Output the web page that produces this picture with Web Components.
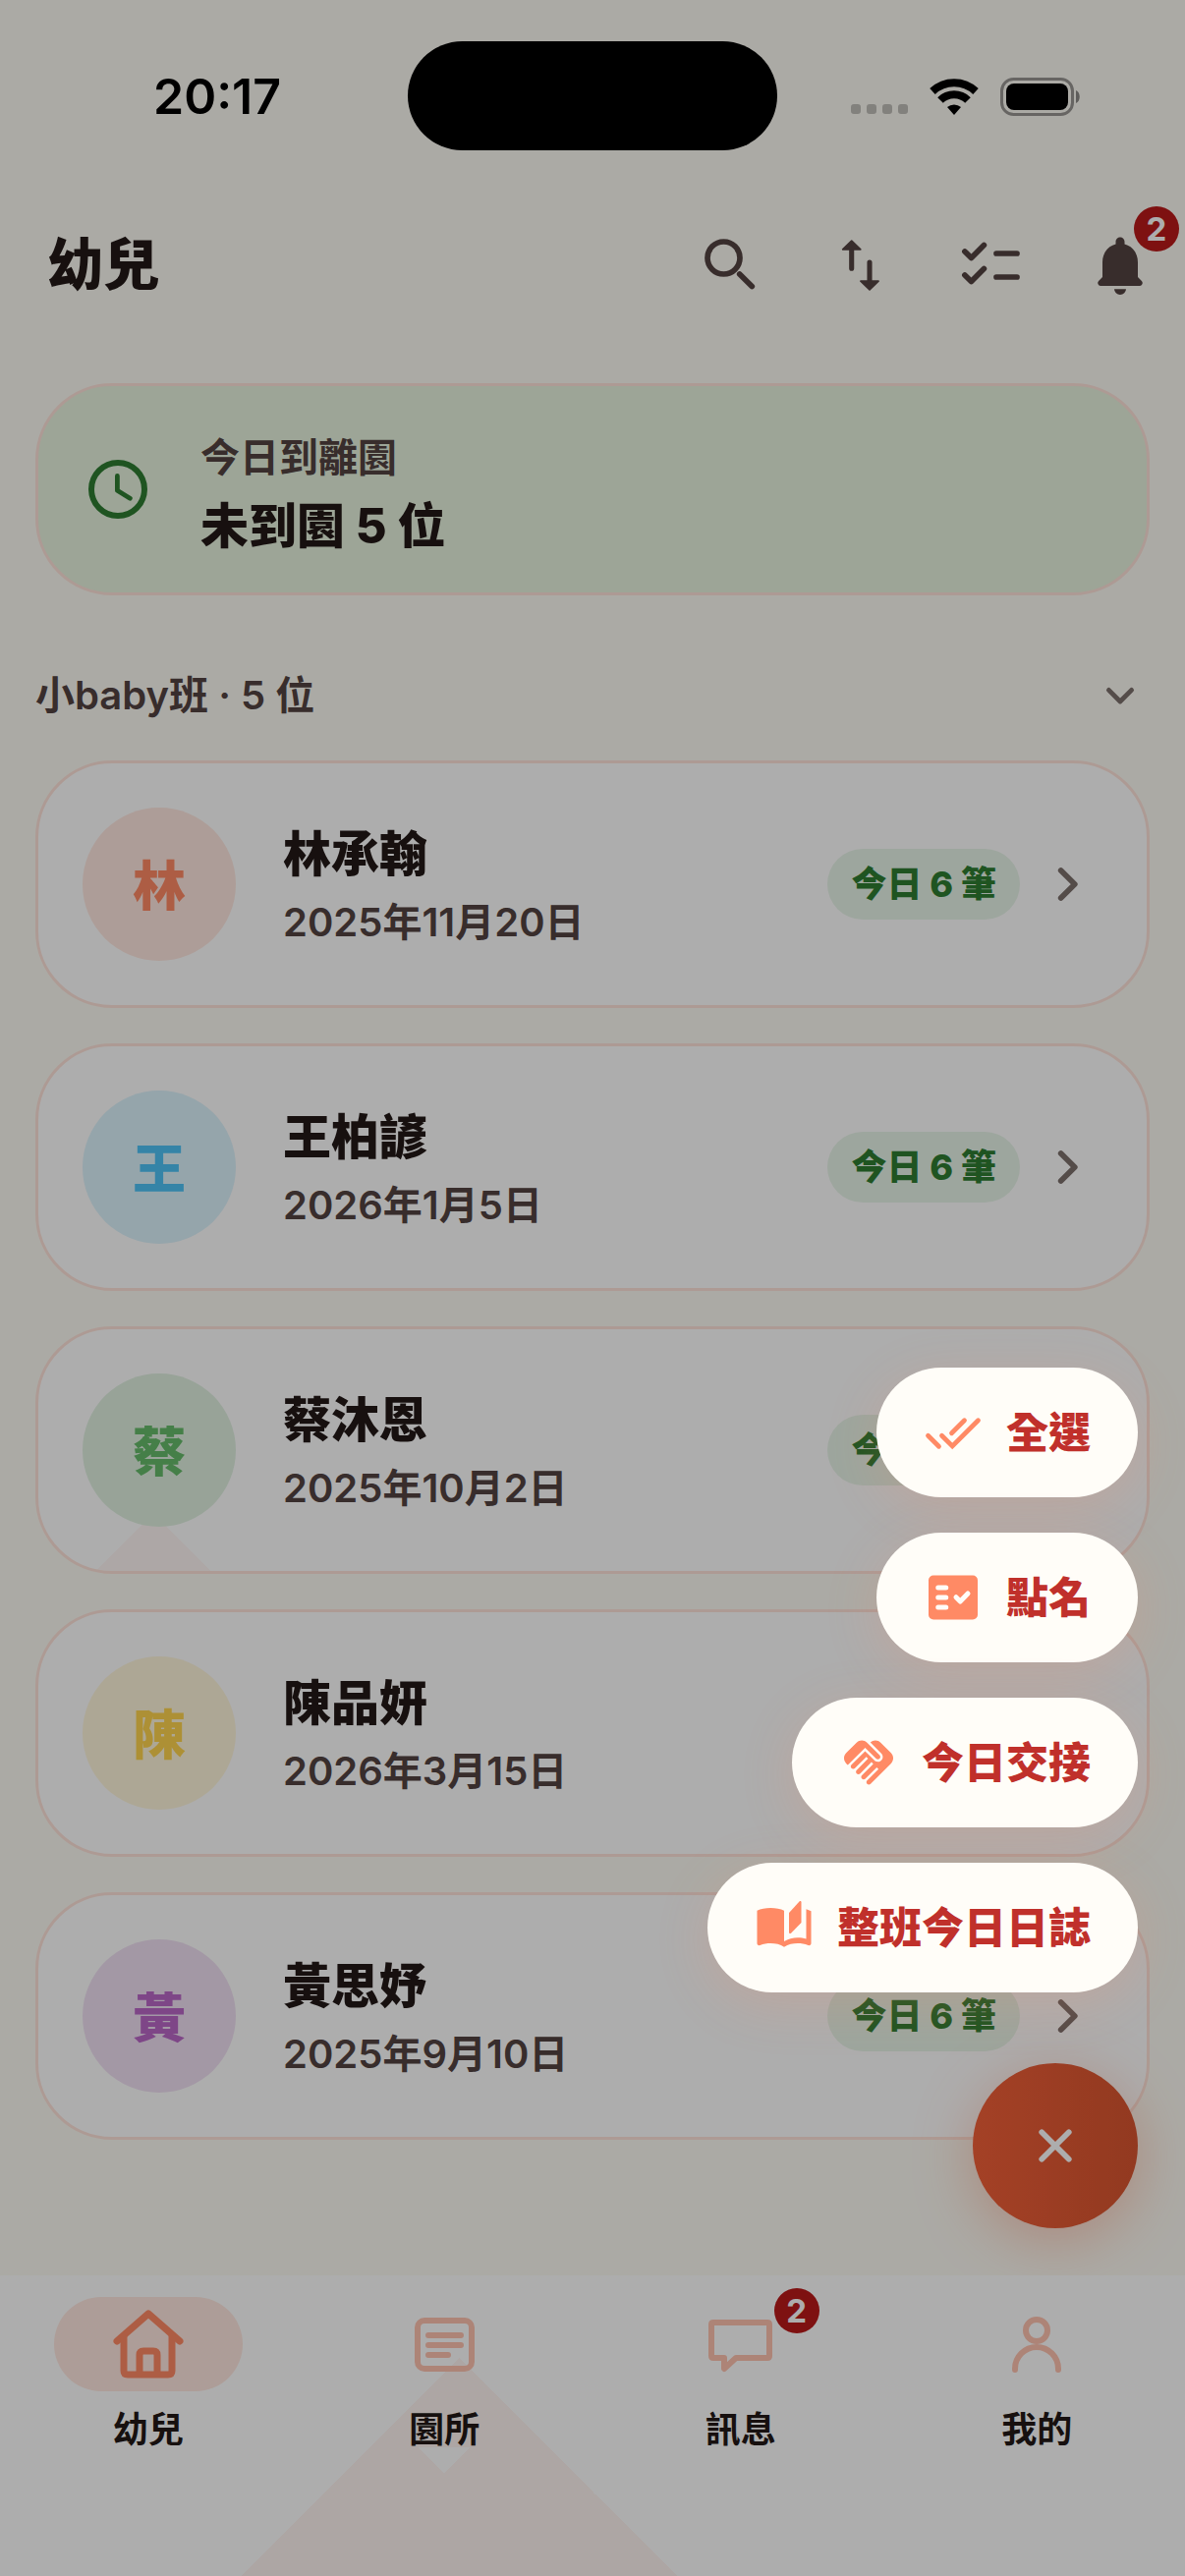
<!DOCTYPE html>
<html lang="zh-Hant">
<head>
<meta charset="utf-8">
<meta name="viewport" content="width=device-width, initial-scale=1">
<title>幼兒</title>
<style>
  html, body {
    margin: 0;
    min-height: 100%;
  }

  body {
    --surface: #fdfbf4;
    --card: #ffffff;
    --outline: #ffe4da;
    --text: #231917;
    --text-soft: #534341;
    --accent: #ff8a65;
    --accent-soft: #ffc3b0;
    --green: #2e7d32;
    --green-soft: #e8f5e9;
    --badge: #ba1a1a;
    background: var(--surface);
    color: var(--text);
    font-family: Inter, "Noto Sans CJK TC", sans-serif;
  }
</style>
</head>
<body>
<app-shell>
  <status-bar slot="top" time="20:17"></status-bar>
  <app-header slot="top">
    幼兒
    <icon-button slot="actions" icon="search" label="搜尋"></icon-button>
    <icon-button slot="actions" icon="sort" label="排序"></icon-button>
    <icon-button slot="actions" icon="checklist" label="選取"></icon-button>
    <icon-button slot="actions" icon="bell" label="通知" count="2"></icon-button>
  </app-header>

  <attendance-banner>
    今日到離園
    <span slot="value">未到園 5 位</span>
  </attendance-banner>

  <class-section>
    <span slot="title">小baby班 · 5 位</span>
    <child-card surname="林" date="2025年11月20日" style="--tone: #ff8a65">林承翰</child-card>
    <child-card surname="王" date="2026年1月5日" style="--tone: #4fc3f7">王柏諺</child-card>
    <child-card surname="蔡" date="2025年10月2日" style="--tone: #66bb6a" peak>蔡沐恩</child-card>
    <child-card surname="陳" date="2026年3月15日" style="--tone: #ffd54f">陳品妍</child-card>
    <child-card surname="黃" date="2025年9月10日" style="--tone: #ba68c8">黃思妤</child-card>
  </class-section>

  <fab-button slot="fab" label="關閉"></fab-button>

  <nav-bar slot="nav">
    <nav-item icon="home" active>幼兒</nav-item>
    <nav-item icon="article">園所</nav-item>
    <nav-item icon="chat" count="2">訊息</nav-item>
    <nav-item icon="person">我的</nav-item>
  </nav-bar>

  <menu-pill slot="menu" icon="done-all">全選</menu-pill>
  <menu-pill slot="menu" icon="fact-check">點名</menu-pill>
  <menu-pill slot="menu" icon="handshake">今日交接</menu-pill>
  <menu-pill slot="menu" icon="book">整班今日日誌</menu-pill>
</app-shell>

<script>
const icons = {
  'search': {
    box: '0 0 24 24',
    body: `<g fill="none" stroke="currentColor" stroke-width="1.9" stroke-linecap="round">
      <circle cx="9.5" cy="9.5" r="5.5"/><path d="M14.9 15l4.2 4.2"/></g>`,
  },
  'sort': {
    box: '0 0 24 24',
    body: `<g fill="currentColor" stroke="currentColor" stroke-linecap="round" stroke-linejoin="round">
      <path stroke-width="1.7" d="M8.9 13.1V6M15 11v7"/>
      <path stroke-width=".6" d="M8.900 3.700l3 2.900H5.900zM15 20.300l-3-2.900h6z"/></g>`,
  },
  'checklist': {
    box: '0 0 24 24',
    body: `<g fill="none" stroke="currentColor" stroke-width="1.9" stroke-linecap="round" stroke-linejoin="round">
      <path d="M3.3 7.3l2.2 2.2 4.3-4.3M3.3 15.3l2.2 2.2 4.3-4.3M14 8h7M14 16h7"/></g>`,
  },
  'bell': {
    box: '0 0 24 24',
    body: `<path fill="currentColor" d="M12 2.5c.8 0 1.5.7 1.5 1.5v.8C16.3 5.5 18 8 18 11v5l1.3 1.3c.6.6.2 1.7-.7 1.7H5.4c-.9 0-1.3-1.1-.7-1.7L6 16v-5c0-3 1.7-5.5 4.5-6.2V4c0-.8.7-1.5 1.5-1.5zM10 20.1h4a2 1.9 0 0 1-4 0z"/>`,
  },
  'clock': {
    box: '0 0 24 24',
    body: `<g fill="none" stroke="currentColor" stroke-linecap="round" stroke-linejoin="round">
      <circle cx="12" cy="12" r="9" stroke-width="2"/><path stroke-width="1.6" d="M11.8 7.5v4.9l4.3 2.7"/></g>`,
  },
  'chevron-down': {
    box: '0 0 24 24',
    body: '<path fill="none" stroke="currentColor" stroke-width="2.4" stroke-linecap="round" stroke-linejoin="round" d="M6.2 9.2l5.8 5.8 5.8-5.8"/>',
  },
  'chevron-right': {
    box: '0 0 24 24',
    body: '<path fill="none" stroke="currentColor" stroke-width="1.9" stroke-linecap="round" stroke-linejoin="round" d="M9.9 7.3l4.7 4.7-4.7 4.7"/>',
  },
  'close': {
    box: '0 0 24 24',
    body: '<path fill="none" stroke="currentColor" stroke-width="1.9" stroke-linecap="round" d="M7.4 7.4l9.2 9.2M16.6 7.4l-9.2 9.2"/>',
  },
  'done-all': {
    box: '0 0 24 24',
    body: `<g fill="none" stroke="currentColor" stroke-width="1.9" stroke-linecap="round">
      <path d="M1.8 13.3l4.4 4.4M7.4 13.3l4.3 4.3L22.2 7.1M16.6 7.1l-5.2 5.2"/></g>`,
  },
  'fact-check': {
    box: '0 0 24 24',
    body: `<rect x="2" y="3" width="20" height="18" rx="2" fill="currentColor"/>
      <path fill="none" stroke="#fffdf8" stroke-width="2" stroke-linecap="round" stroke-linejoin="round" d="M5.9 8h3.2M5.9 12h3.2M5.9 16h3.2M13.2 11.9l1.7 1.7 3.1-3.2"/>`,
  },
  'handshake': {
    box: '0 0 24 24',
    body: `<path fill="currentColor" d="M16.48 10.41c-.39.39-1.04.39-1.43 0l-4.47-4.46-7.05 7.04-.66-.63c-1.17-1.17-1.17-3.07 0-4.24l4.24-4.24c1.17-1.17 3.07-1.17 4.24 0l5.13 5.1c.39.39.39 1.04 0 1.43zm.7-2.12c.78.78.78 2.05 0 2.83-1.27 1.27-2.61.22-2.83 0l-3.76-3.76-5.57 5.57c-.39.39-.39 1.02 0 1.41s1.02.39 1.42 0l4.62-4.62.71.71-4.62 4.62c-.39.39-.39 1.02 0 1.41s1.02.39 1.42 0l4.62-4.62.71.71-4.62 4.62c-.39.39-.39 1.02 0 1.41s1.02.39 1.41 0l4.62-4.62.71.71-4.62 4.62c-.39.39-.39 1.02 0 1.41s1.02.39 1.41 0l8.32-8.34c1.17-1.17 1.17-3.07 0-4.24l-4.24-4.24c-1.15-1.15-3.01-1.17-4.18-.06l4.47 4.47z"/>`,
  },
  'book': {
    box: '0 0 24 24',
    body: `<path fill="currentColor" d="M1 5.1C2.4 4.3 4.500 4 6.500 4S10.600 4.300 12 5.100V17.600c1.500-.9 3.700-1.500 5.500-1.500 1.200 0 2.400.2 3.500.5V4.500c.7.2 1.400.5 2 .8V18.400c0 .7-.6 1-1.200.8-1.400-.6-2.800-.8-4.300-.8-1.800 0-3.900.4-5.500 1.500-1.500-1.100-3.600-1.500-5.500-1.500-1.500 0-2.900.2-4.300.8-.6.2-1.200-.1-1.200-.8z"/>
      <path fill="currentColor" d="M14 6l4.200-4.600c.3-.3.8-.2.8.3V10l-4.200 4.300c-.3.3-.8.1-.8-.3z"/>`,
  },
  'home': {
    box: '0 0 72 70',
    body: `<g fill="none" stroke="currentColor" stroke-width="7" stroke-linecap="round" stroke-linejoin="round">
      <path d="M4 32L36 4l32 28"/><path d="M11 27v35q0 4 4 4h41q4 0 4-4V27"/><path d="M27 64V46q0-4 4-4h10q4 0 4 4v18"/></g>`,
  },
  'article': {
    box: '-6 -8 72 70',
    body: `<g fill="none" stroke="currentColor" stroke-width="6" stroke-linecap="round">
      <rect x="3" y="3" width="55" height="49" rx="7"/><path d="M14 18h33M14 28h33M14 38h20"/></g>`,
  },
  'chat': {
    box: '-3 -10 72 70',
    body: `<path fill="none" stroke="currentColor" stroke-width="6" stroke-linejoin="round" d="M5 3h55q2 0 2 2v32q0 2-2 2H28L16 50V39H5q-2 0-2-2V5q0-2 2-2z"/>`,
  },
  'person': {
    box: '-10 -7 72 70',
    body: `<g fill="none" stroke="currentColor" stroke-width="6" stroke-linecap="round">
      <circle cx="26" cy="14" r="11"/><path d="M4 54v-1a22 22 0 0 1 44 0v1"/></g>`,
  },
};

class UIIcon extends HTMLElement {
  constructor() {
    super();
    this.attachShadow({ mode: 'open' });
  }

  connectedCallback() {
    const { box, body } = icons[this.getAttribute('name')];
    this.shadowRoot.innerHTML = `
      <style>
        :host {
          display: block;
          flex: none;
          width: 72px;
          height: 72px;
        }
        svg {
          display: block;
          width: 100%;
          height: 100%;
        }
      </style>
      <svg viewBox="${box}" aria-hidden="true">${body}</svg>
    `;
  }
}

class CountBadge extends HTMLElement {
  constructor() {
    super();
    this.attachShadow({ mode: 'open' });
    this.shadowRoot.innerHTML = `
      <style>
        :host {
          display: block;
          min-width: 46px;
          border-radius: 23px;
          background: var(--badge);
          color: #fff;
          font-size: 33px;
          font-weight: 700;
          line-height: 46px;
          text-align: center;
        }
      </style>
      <slot></slot>
    `;
  }
}

class AppShell extends HTMLElement {
  constructor() {
    super();
    this.attachShadow({ mode: 'open' });
    this.shadowRoot.innerHTML = `
      <style>
        :host {
          display: flex;
          flex-direction: column;
          position: relative;
          min-height: 100vh;
        }
        main {
          display: flex;
          flex: 1;
          flex-direction: column;
          gap: 36px;
          position: relative;
          overflow: hidden;
          padding: 36px 36px 138px;
        }
        .fab {
          position: absolute;
          right: 48px;
          bottom: 48px;
        }
        .scrim {
          position: absolute;
          inset: 0;
          background: rgba(0, 0, 0, .32);
        }
        .menu {
          display: flex;
          flex-direction: column;
          align-items: flex-end;
          gap: 36px;
          position: absolute;
          right: 48px;
          bottom: 594px;
        }
      </style>
      <slot name="top"></slot>
      <main>
        <slot></slot>
        <div class="fab"><slot name="fab"></slot></div>
      </main>
      <slot name="nav"></slot>
      <div class="scrim"></div>
      <div class="menu" role="menu"><slot name="menu"></slot></div>
    `;
  }
}

class StatusBar extends HTMLElement {
  constructor() {
    super();
    this.attachShadow({ mode: 'open' });
    this.shadowRoot.innerHTML = `
      <style>
        :host {
          display: grid;
          grid-template-columns: 1fr 376px 1fr;
          align-items: center;
          height: 186px;
          color: #000;
        }
        .time {
          padding-top: 10px;
          padding-left: 156px;
          font-size: 50px;
          font-weight: 600;
          line-height: 60px;
        }
        .island {
          height: 111px;
          margin-top: 8px;
          border-radius: 56px;
          background: #000;
        }
        .system {
          display: flex;
          align-items: center;
          justify-content: flex-end;
          gap: 22px;
          padding-top: 10px;
          padding-right: 106px;
        }
        svg {
          display: block;
          flex: none;
        }
      </style>
      <div class="time">${this.getAttribute('time')}</div>
      <div class="island"></div>
      <div class="system">
        <svg width="58" height="38" viewBox="0 0 58 38" fill="rgba(0,0,0,.24)">
          <rect x="0" y="27" width="10" height="10" rx="3"/>
          <rect x="16" y="27" width="10" height="10" rx="3"/>
          <rect x="32" y="27" width="10" height="10" rx="3"/>
          <rect x="48" y="27" width="10" height="10" rx="3"/>
        </svg>
        <svg width="50" height="38" viewBox="0 0 50 38" fill="none" stroke="#000" stroke-width="8">
          <path d="M3 14a32 32 0 0 1 44 0"/>
          <path d="M11 23a20 20 0 0 1 28 0"/>
          <path d="M25 38l-7-8a11 11 0 0 1 14 0z" fill="#000" stroke="none"/>
        </svg>
        <svg width="82" height="39" viewBox="0 0 82 39">
          <rect x="1.5" y="1.5" width="72" height="36" rx="12" fill="none" stroke="rgba(0,0,0,.4)" stroke-width="3"/>
          <rect x="6" y="6" width="63" height="27" rx="8"/>
          <path d="M77 13c5 2 5 11 0 13z" fill="rgba(0,0,0,.45)"/>
        </svg>
      </div>
    `;
  }
}

class AppHeader extends HTMLElement {
  constructor() {
    super();
    this.attachShadow({ mode: 'open' });
    this.shadowRoot.innerHTML = `
      <style>
        :host {
          display: block;
        }
        header {
          display: flex;
          align-items: center;
          justify-content: space-between;
          height: 168px;
          padding-left: 48px;
        }
        h1 {
          margin: 0;
          font-size: 57px;
          font-weight: 800;
          line-height: 84px;
        }
        .actions {
          display: flex;
        }
      </style>
      <header>
        <h1><slot></slot></h1>
        <div class="actions"><slot name="actions"></slot></div>
      </header>
    `;
  }
}

class IconButton extends HTMLElement {
  constructor() {
    super();
    this.attachShadow({ mode: 'open' });
  }

  connectedCallback() {
    const count = this.getAttribute('count');
    this.shadowRoot.innerHTML = `
      <style>
        :host {
          display: block;
          position: relative;
        }
        button {
          display: grid;
          place-items: center;
          width: 132px;
          height: 144px;
          border: 0;
          padding: 0;
          background: none;
          color: var(--text-soft);
          font: inherit;
        }
        count-badge {
          position: absolute;
          top: 12px;
          right: 6px;
        }
      </style>
      <button type="button" aria-label="${this.getAttribute('label')}">
        <ui-icon name="${this.getAttribute('icon')}"></ui-icon>
        ${count ? `<count-badge>${count}</count-badge>` : ''}
      </button>
    `;
  }
}

class AttendanceBanner extends HTMLElement {
  constructor() {
    super();
    this.attachShadow({ mode: 'open' });
    this.shadowRoot.innerHTML = `
      <style>
        :host {
          display: flex;
          align-items: center;
          gap: 48px;
          box-sizing: border-box;
          border: 3px solid var(--outline);
          border-radius: 78px;
          padding: 31px 45px;
          background: #e7f3df;
        }
        ui-icon {
          color: var(--green);
        }
        .text {
          display: grid;
          gap: 4px;
          padding-top: 12px;
        }
        .label {
          color: var(--text-soft);
          font-size: 40px;
          font-weight: 600;
          line-height: 60px;
        }
        .value {
          font-size: 49px;
          font-weight: 800;
          line-height: 72px;
        }
      </style>
      <ui-icon name="clock"></ui-icon>
      <div class="text">
        <div class="label"><slot></slot></div>
        <div class="value"><slot name="value"></slot></div>
      </div>
    `;
  }
}

class ClassSection extends HTMLElement {
  constructor() {
    super();
    this.attachShadow({ mode: 'open' });
    this.shadowRoot.innerHTML = `
      <style>
        :host {
          display: block;
        }
        button {
          display: flex;
          align-items: center;
          justify-content: space-between;
          width: 100%;
          height: 132px;
          border: 0;
          padding: 0 6px 0 0;
          background: none;
          color: var(--text-soft);
          font: inherit;
          font-size: 40px;
          font-weight: 600;
          line-height: 60px;
        }
        ui-icon {
          width: 48px;
          height: 48px;
          color: #7c706c;
        }
        .list {
          display: flex;
          flex-direction: column;
          gap: 36px;
        }
      </style>
      <button type="button" aria-expanded="true">
        <slot name="title"></slot>
        <ui-icon name="chevron-down"></ui-icon>
      </button>
      <div class="list"><slot></slot></div>
    `;
  }
}

class ChildCard extends HTMLElement {
  constructor() {
    super();
    this.attachShadow({ mode: 'open' });
  }

  connectedCallback() {
    this.shadowRoot.innerHTML = `
      <style>
        :host {
          display: block;
        }
        a {
          display: flex;
          align-items: center;
          border: 3px solid var(--outline);
          border-radius: 78px;
          padding: 45px;
          background: var(--card);
          color: inherit;
          text-decoration: none;
        }
        :host([peak]) a {
          background: conic-gradient(from 135deg at 117px 188px, #fff7f5 90deg, transparent 0) var(--card);
        }
        .avatar {
          display: grid;
          place-items: center;
          box-sizing: border-box;
          width: 156px;
          height: 156px;
          padding-bottom: 4px;
          border-radius: 50%;
          background: color-mix(in srgb, var(--tone) 20%, var(--card));
          color: var(--tone);
          font-size: 54px;
          font-weight: 800;
        }
        .info {
          flex: 1;
          padding-top: 6px;
          padding-left: 48px;
        }
        .name {
          font-size: 49px;
          font-weight: 800;
          line-height: 72px;
        }
        .date {
          color: var(--text-soft);
          font-size: 40px;
          font-weight: 600;
          line-height: 66px;
        }
        .chip {
          margin-right: 12px;
          border-radius: 36px;
          padding: 0 24px;
          background: var(--green-soft);
          color: var(--green);
          font-size: 36px;
          font-weight: 800;
          line-height: 72px;
        }
        ui-icon {
          color: #7c706c;
        }
      </style>
      <a href="#">
        <div class="avatar">${this.getAttribute('surname')}</div>
        <div class="info">
          <div class="name"><slot></slot></div>
          <div class="date">${this.getAttribute('date')}</div>
        </div>
        <div class="chip">今日 6 筆</div>
        <ui-icon name="chevron-right"></ui-icon>
      </a>
    `;
  }
}

class FabButton extends HTMLElement {
  constructor() {
    super();
    this.attachShadow({ mode: 'open' });
    this.shadowRoot.innerHTML = `
      <style>
        :host {
          display: block;
        }
        button {
          display: grid;
          place-items: center;
          width: 168px;
          height: 168px;
          border: 0;
          border-radius: 50%;
          padding: 0;
          background: linear-gradient(90deg, #f26038, #d85530);
          box-shadow: 0 12px 60px rgba(255, 112, 67, .35);
          color: #fff;
        }
      </style>
      <button type="button" aria-label="${this.getAttribute('label')}">
        <ui-icon name="close"></ui-icon>
      </button>
    `;
  }
}

class MenuPill extends HTMLElement {
  constructor() {
    super();
    this.attachShadow({ mode: 'open' });
  }

  connectedCallback() {
    this.shadowRoot.innerHTML = `
      <style>
        :host {
          display: block;
        }
        button {
          display: flex;
          align-items: center;
          gap: 24px;
          height: 132px;
          border: 0;
          border-radius: 66px;
          padding: 0 48px;
          background: #fffdf8;
          box-shadow: 0 12px 54px rgba(255, 138, 101, .2);
          color: #c0302b;
          font: inherit;
          font-size: 43px;
          font-weight: 800;
          line-height: 60px;
        }
        ui-icon {
          width: 60px;
          height: 60px;
          color: var(--accent);
        }
      </style>
      <button type="button" role="menuitem">
        <ui-icon name="${this.getAttribute('icon')}"></ui-icon>
        <slot></slot>
      </button>
    `;
  }
}

class NavBar extends HTMLElement {
  constructor() {
    super();
    this.attachShadow({ mode: 'open' });
    // tinted peak rising behind the second tab, with a small notch under its label
    this.shadowRoot.innerHTML = `
      <style>
        :host {
          display: block;
        }
        nav {
          display: grid;
          grid-template-columns: repeat(4, 1fr);
          box-sizing: border-box;
          min-height: 306px;
          padding-top: 22px;
          background:
            conic-gradient(from -45deg at 50% 100%, #fff 90deg, transparent 0) 421px 175px / 62px 26px no-repeat,
            conic-gradient(from 135deg at 467px 84px, #fff5f2 90deg, #fff 0);
        }
      </style>
      <nav><slot></slot></nav>
    `;
  }
}

class NavItem extends HTMLElement {
  constructor() {
    super();
    this.attachShadow({ mode: 'open' });
  }

  connectedCallback() {
    const count = this.getAttribute('count');
    this.shadowRoot.innerHTML = `
      <style>
        :host {
          display: block;
        }
        a {
          display: flex;
          flex-direction: column;
          align-items: center;
          gap: 12px;
          color: inherit;
          font-size: 36px;
          font-weight: 600;
          line-height: 54px;
          text-decoration: none;
        }
        .indicator {
          display: grid;
          place-items: center;
          position: relative;
          width: 192px;
          height: 96px;
          border-radius: 48px;
          color: var(--accent-soft);
        }
        :host([active]) .indicator {
          background: #ffe8e0;
          color: var(--accent);
        }
        count-badge {
          position: absolute;
          top: -9px;
          right: 16px;
        }
      </style>
      <a href="#">
        <span class="indicator">
          <ui-icon name="${this.getAttribute('icon')}"></ui-icon>
          ${count ? `<count-badge>${count}</count-badge>` : ''}
        </span>
        <span><slot></slot></span>
      </a>
    `;
  }
}

customElements.define('ui-icon', UIIcon);
customElements.define('count-badge', CountBadge);
customElements.define('app-shell', AppShell);
customElements.define('status-bar', StatusBar);
customElements.define('app-header', AppHeader);
customElements.define('icon-button', IconButton);
customElements.define('attendance-banner', AttendanceBanner);
customElements.define('class-section', ClassSection);
customElements.define('child-card', ChildCard);
customElements.define('fab-button', FabButton);
customElements.define('menu-pill', MenuPill);
customElements.define('nav-bar', NavBar);
customElements.define('nav-item', NavItem);
</script>
</body>
</html>
